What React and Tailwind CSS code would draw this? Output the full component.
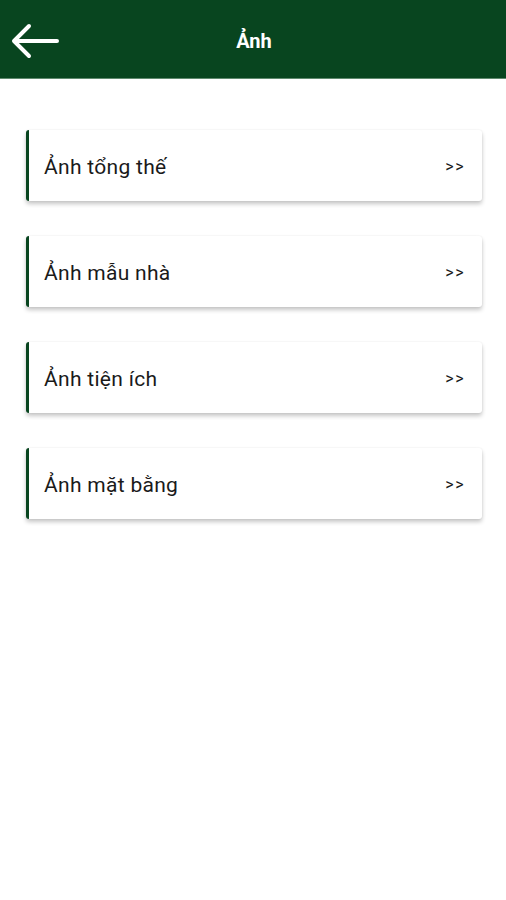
export default function App() {
  const items = ["Ảnh tổng thế", "Ảnh mẫu nhà", "Ảnh tiện ích", "Ảnh mặt bằng"];
  return (
    <div className="w-[506px] h-[900px] bg-white" style={{ fontFamily: "Roboto, 'Noto Sans', sans-serif" }}>
      <div className="h-[79px] bg-[#08451f] border-b border-[#5f8a6e] flex items-center relative">
        <svg className="absolute left-[11px] top-[23px]" width="48" height="36" viewBox="0 0 48 36" fill="none" stroke="white" strokeWidth="4" strokeLinecap="round" strokeLinejoin="round">
          <path d="M46 18H4" />
          <path d="M18 3L3 18L18 33" />
        </svg>
        <div className="w-full text-center text-white font-bold text-[20px] pl-[2px] pt-[3px]">Ảnh</div>
      </div>
      <div className="flex flex-col gap-[35px] pt-[51px] px-[26px] pr-[24px]">
        {items.map((t) => (
          <div key={t} className="h-[71px] bg-white border-l-[3px] border-[#08451f] rounded-[3px] flex items-center justify-between pl-[15px] pr-[17px] shadow-[0_3px_4px_rgba(0,0,0,0.22),0_0_2px_rgba(0,0,0,0.08)]">
            <span className="text-[21px] tracking-[0.3px] text-[#1a1a1a] pt-[4px]">{t}</span>
            <span className="text-[16px] text-[#1a1a1a] tracking-[1.5px] pt-[2px]">&gt;&gt;</span>
          </div>
        ))}
      </div>
    </div>
  );
}
